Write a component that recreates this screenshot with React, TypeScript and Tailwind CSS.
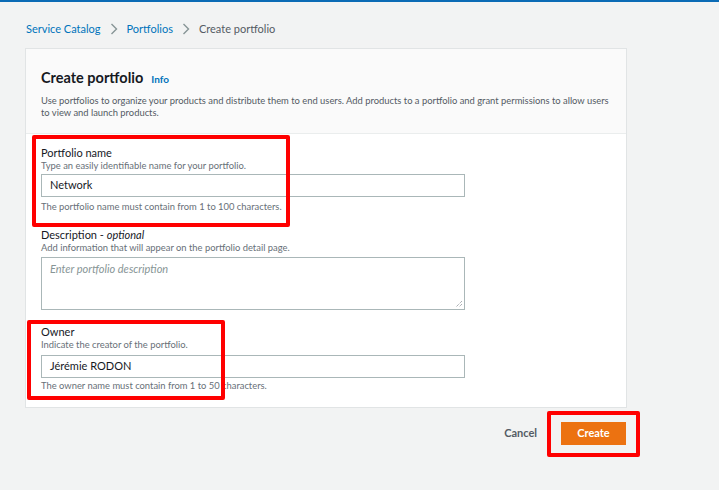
import React from "react";

function Chevron() {
  return (
    <svg width="8" height="12" viewBox="0 0 8 12" className="mx-[9px]">
      <path d="M1.5 1 L6.5 6 L1.5 11" fill="none" stroke="#879596" strokeWidth="1.4" />
    </svg>
  );
}

export default function App() {
  return (
    <div className="relative min-h-[490px] w-[719px] bg-[#f2f3f3] text-[#16191f]" style={{ fontFamily: 'Lato, "Open Sans", Arial, sans-serif' }}>
      <div className="h-[2px] bg-[#0b6bb5]" />
      <div className="flex items-center h-4 mt-[19px] ml-[26px] text-[11px] leading-4">
        <span className="text-[#0073bb]">Service Catalog</span>
        <Chevron />
        <span className="text-[#0073bb]">Portfolios</span>
        <Chevron />
        <span className="text-[#545b64]">Create portfolio</span>
      </div>
      <div className="ml-[25px] mt-[11px] w-[602px] border border-[#e1e4e5] bg-white">
        <div className="bg-[#fafafa] border-b border-[#eaeded] px-[15px] pt-[19px] pb-[14px]">
          <div className="flex items-baseline h-5">
            <span className="text-[14.5px] font-bold leading-5">Create portfolio</span>
            <span className="ml-[8px] text-[10px] font-bold text-[#0073bb]">Info</span>
          </div>
          <p className="mt-[7px] text-[9.4px] leading-3 text-[#545b64]">
            Use portfolios to organize your products and distribute them to end users. Add products to a portfolio and grant permissions to allow users to view and launch products.
          </p>
        </div>
        <div className="px-[15px] pt-[12px] pb-[15px]">
          <div className="text-[11px] leading-[14px]">Portfolio name</div>
          <div className="text-[9.4px] leading-3 text-[#687078]">Type an easily identifiable name for your portfolio.</div>
          <div className="mt-[2px] h-[23px] w-[424px] border border-[#aab7b8] flex items-center px-[8px] text-[11px]">Network</div>
          <div className="mt-[4px] text-[9.4px] leading-3 text-[#687078]">The portfolio name must contain from 1 to 100 characters.</div>

          <div className="mt-[15px] text-[11px] leading-[14px]">
            Description - <i>optional</i>
          </div>
          <div className="text-[9.4px] leading-3 text-[#687078]">Add information that will appear on the portfolio detail page.</div>
          <div className="relative mt-[3px] h-[53px] w-[424px] border border-[#aab7b8] px-[8px] pt-[3px] text-[11px] italic text-[#879596]">
            Enter portfolio description
            <svg className="absolute right-[1px] bottom-[1px]" width="8" height="8" viewBox="0 0 8 8">
              <path d="M7 1 L1 7 M7 4 L4 7" stroke="#687078" strokeWidth="0.8" strokeDasharray="1 1" />
            </svg>
          </div>

          <div className="mt-[15px] text-[11px] leading-[14px]">Owner</div>
          <div className="text-[9.4px] leading-3 text-[#687078]">Indicate the creator of the portfolio.</div>
          <div className="mt-[4px] h-[23px] w-[424px] border border-[#aab7b8] flex items-center px-[8px] text-[11px]">Jérémie RODON</div>
          <div className="mt-[2px] text-[9.4px] leading-3 text-[#687078]">The owner name must contain from 1 to 50 characters.</div>
        </div>
      </div>
      <div className="flex items-center justify-end w-[626px] mt-[14px]">
        <span className="text-[11px] font-bold text-[#545b64] mr-[24px]">Cancel</span>
        <div className="h-[23px] w-[65px] bg-[#ec7211] flex items-center justify-center text-[11px] font-bold text-white">Create</div>
      </div>

      <div className="absolute left-[32px] top-[135px] w-[258px] h-[92px] border-4 border-[#ff0000] rounded-[2px]" />
      <div className="absolute left-[27px] top-[320px] w-[198px] h-[80px] border-4 border-[#ff0000] rounded-[2px]" />
      <div className="absolute left-[547px] top-[411px] w-[93px] h-[46px] border-4 border-[#ff0000] rounded-[2px]" />
    </div>
  );
}
